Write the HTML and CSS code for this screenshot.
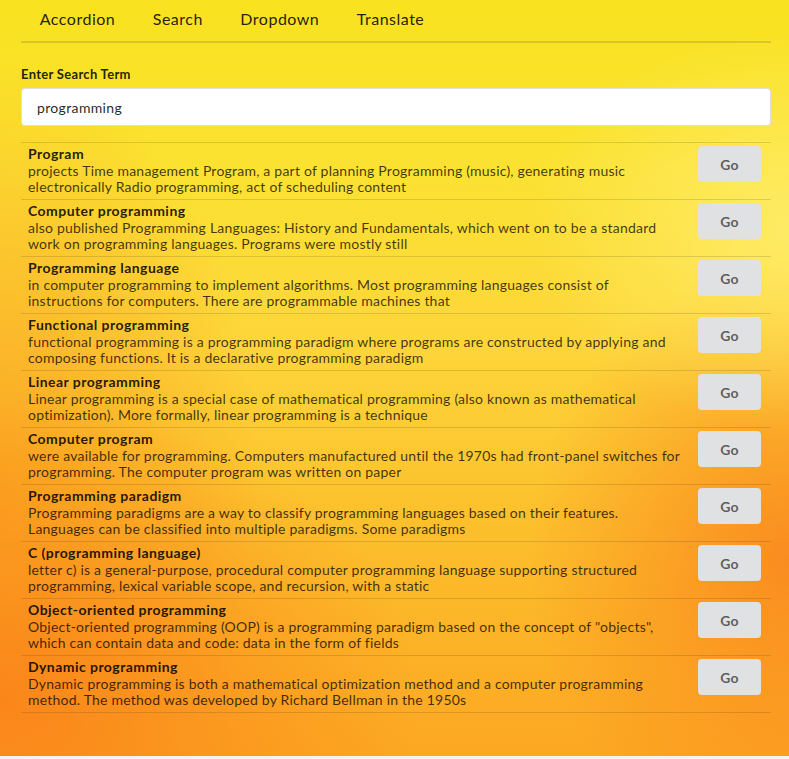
FILE: index.html
```html
<!DOCTYPE html>
<html>
<head>
<meta charset="utf-8">
<link rel="stylesheet" href="styles.css">
</head>
<body>
<div class="page">
  <div class="container">
    <nav class="menu">
      <a class="menu-item">Accordion</a>
      <a class="menu-item">Search</a>
      <a class="menu-item">Dropdown</a>
      <a class="menu-item">Translate</a>
    </nav>
    <form class="form">
      <label class="field-label">Enter Search Term</label>
      <input class="input" type="text" value="programming">
    </form>
    <div class="list">
      <div class="item">
        <div class="content">
          <div class="header">Program</div>
          <div class="description">projects Time management Program, a part of planning Programming (music), generating music electronically Radio programming, act of scheduling content</div>
        </div>
        <button class="button" type="button">Go</button>
      </div>
      <div class="item">
        <div class="content">
          <div class="header">Computer programming</div>
          <div class="description">also published Programming Languages: History and Fundamentals, which went on to be a standard work on programming languages. Programs were mostly still</div>
        </div>
        <button class="button" type="button">Go</button>
      </div>
      <div class="item">
        <div class="content">
          <div class="header">Programming language</div>
          <div class="description">in computer programming to implement algorithms. Most programming languages consist of instructions for computers. There are programmable machines that</div>
        </div>
        <button class="button" type="button">Go</button>
      </div>
      <div class="item">
        <div class="content">
          <div class="header">Functional programming</div>
          <div class="description">functional programming is a programming paradigm where programs are constructed by applying and composing functions. It is a declarative programming paradigm</div>
        </div>
        <button class="button" type="button">Go</button>
      </div>
      <div class="item">
        <div class="content">
          <div class="header">Linear programming</div>
          <div class="description">Linear programming is a special case of mathematical programming (also known as mathematical optimization). More formally, linear programming is a technique</div>
        </div>
        <button class="button" type="button">Go</button>
      </div>
      <div class="item">
        <div class="content">
          <div class="header">Computer program</div>
          <div class="description">were available for programming. Computers manufactured until the 1970s had front-panel switches for programming. The computer program was written on paper</div>
        </div>
        <button class="button" type="button">Go</button>
      </div>
      <div class="item">
        <div class="content">
          <div class="header">Programming paradigm</div>
          <div class="description">Programming paradigms are a way to classify programming languages based on their features. Languages can be classified into multiple paradigms. Some paradigms</div>
        </div>
        <button class="button" type="button">Go</button>
      </div>
      <div class="item">
        <div class="content">
          <div class="header">C (programming language)</div>
          <div class="description">letter c) is a general-purpose, procedural computer programming language supporting structured programming, lexical variable scope, and recursion, with a static</div>
        </div>
        <button class="button" type="button">Go</button>
      </div>
      <div class="item">
        <div class="content">
          <div class="header">Object-oriented programming</div>
          <div class="description">Object-oriented programming (OOP) is a programming paradigm based on the concept of "objects", which can contain data and code: data in the form of fields</div>
        </div>
        <button class="button" type="button">Go</button>
      </div>
      <div class="item">
        <div class="content">
          <div class="header">Dynamic programming</div>
          <div class="description">Dynamic programming is both a mathematical optimization method and a computer programming method. The method was developed by Richard Bellman in the 1950s</div>
        </div>
        <button class="button" type="button">Go</button>
      </div>
    </div>
  </div>
</div>
</body>
</html>
```
FILE: styles.css
```css
html, body {
  margin: 0;
  padding: 0;
  background: #f4f4f4;
}
body {
  font-family: Lato, "Open Sans", sans-serif;
  font-size: 14px;
  color: rgba(0, 0, 0, 0.87);
}
.page {
  height: 756px;
  overflow: hidden;
  background:
    radial-gradient(ellipse 260px 200px at 789px 230px, rgba(255, 238, 110, 0.85), rgba(255, 238, 110, 0) 100%),
    radial-gradient(ellipse 420px 300px at 0px 700px, rgba(250, 130, 25, 0.9), rgba(250, 130, 25, 0) 100%),
    radial-gradient(ellipse 260px 300px at 789px 560px, rgba(250, 135, 30, 0.9), rgba(250, 135, 30, 0) 100%),
    radial-gradient(ellipse 260px 420px at 0px 480px, rgba(250, 160, 30, 0.8), rgba(250, 160, 30, 0) 100%),
    linear-gradient(180deg, #f9e21f 0%, #fbe232 22%, #fdd63a 45%, #fcbf2c 70%, #fca722 100%);
}
.container {
  width: 750px;
  margin-left: 21px;
}
.menu {
  display: flex;
  height: 41px;
  align-items: center;
  border-bottom: 2px solid rgba(34, 36, 38, 0.15);
}
.menu-item {
  padding: 0 18.75px;
  font-size: 16px;
  letter-spacing: 0.5px;
  line-height: 1;
  color: rgba(0, 0, 0, 0.87);
  margin-top: -4px;
}
.form {
  display: flex;
  flex-direction: column;
  padding-top: 23px;
}
.field-label {
  font-size: 13px;
  font-weight: 700;
  letter-spacing: 0.3px;
  line-height: 16px;
  margin-bottom: 6px;
}
.input {
  box-sizing: border-box;
  height: 38px;
  margin: 0;
  padding: 0 15px;
  font-family: Lato, sans-serif;
  font-size: 14px;
  letter-spacing: 0.35px;
  color: rgba(0, 0, 0, 0.87);
  background: #fff;
  border: 1px solid rgba(34, 36, 38, 0.15);
  border-radius: 4px;
  outline: none;
}
.list {
  margin-top: 16px;
  border-bottom: 1px solid rgba(34, 36, 38, 0.15);
}
.item {
  display: flex;
  align-items: flex-start;
  padding: 3px 10px 4px 7px;
  border-top: 1px solid rgba(34, 36, 38, 0.15);
  line-height: 16px;
}
.content {
  flex: 1;
}
.header {
  font-weight: 700;
  letter-spacing: 0.45px;
  line-height: 15px;
  margin-bottom: 2px;
  color: rgba(0, 0, 0, 0.87);
}
.description {
  letter-spacing: 0.22px;
  color: rgba(0, 0, 0, 0.75);
}
.button {
  flex: none;
  width: 63px;
  height: 36px;
  margin: 0 0 0 15px;
  padding: 0;
  font-family: Lato, sans-serif;
  font-size: 14px;
  font-weight: 700;
  letter-spacing: 0.3px;
  color: rgba(0, 0, 0, 0.6);
  background: #e0e1e2;
  border: none;
  border-radius: 4px;
}
```
